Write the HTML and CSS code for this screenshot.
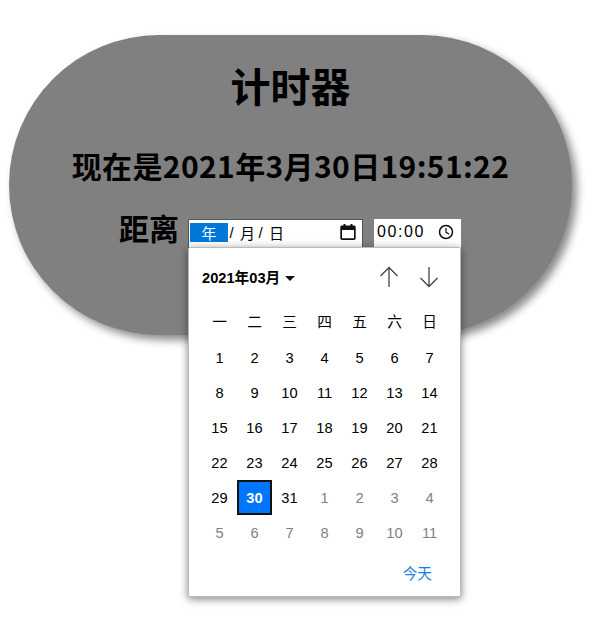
FILE: index.html
```html
<!DOCTYPE html>
<html lang="zh-CN">
<head>
<meta charset="utf-8">
<title>计时器</title>
<link rel="stylesheet" href="styles.css">
</head>
<body>
<main class="pill">
  <h1 class="title">计时器</h1>
  <h2 class="now">现在是2021年3月30日19:51:22</h2>
  <div class="target">
    <span class="label">距离</span>
    <div class="date-input">
      <span class="seg seg-on">年</span><span class="sep">/</span><span class="seg seg-m">月</span><span class="sep sep-2">/</span><span class="seg seg-d">日</span>
      <svg class="cal-icon" viewBox="0 0 18 18" width="18" height="18" aria-hidden="true"><path d="M3 2.5h1.5V1h2v1.5h5V1h2v1.5H15c1 0 1.700.7 1.700 1.700v11.100c0 1-.7 1.700-1.700 1.700H3c-1 0-1.700-.7-1.700-1.700V4.200C1.300 3.200 2 2.500 3 2.500zM3 7v8.300h12V7z" fill="#111"/></svg>
    </div>
    <div class="time-input">
      <span class="time-text">00:00</span>
      <svg class="clock-icon" viewBox="0 0 16 16" width="16" height="16" aria-hidden="true"><circle cx="8" cy="8" r="6.500" fill="none" stroke="#111" stroke-width="1.500"/><path d="M8 4v4.300l3.200 1.800" fill="none" stroke="#111" stroke-width="1.200"/></svg>
    </div>
    <section class="picker">
      <header class="picker-head">
        <span class="month">2021年03月<i class="caret"></i></span>
        <span class="arrows">
          <svg viewBox="0 0 20 22" width="20" height="22" aria-hidden="true"><path d="M10 21V1.500M1.500 10L10 1.500 18.500 10" fill="none" stroke="#444" stroke-width="1.300"/></svg>
          <svg viewBox="0 0 20 22" width="20" height="22" aria-hidden="true"><path d="M10 1v19.500M1.500 12l8.500 8.500 8.500-8.500" fill="none" stroke="#444" stroke-width="1.300"/></svg>
        </span>
      </header>
      <div class="grid">
        <span class="wd">一</span><span class="wd">二</span><span class="wd">三</span><span class="wd">四</span><span class="wd">五</span><span class="wd">六</span><span class="wd">日</span>
        <span>1</span><span>2</span><span>3</span><span>4</span><span>5</span><span>6</span><span>7</span>
        <span>8</span><span>9</span><span>10</span><span>11</span><span>12</span><span>13</span><span>14</span>
        <span>15</span><span>16</span><span>17</span><span>18</span><span>19</span><span>20</span><span>21</span>
        <span>22</span><span>23</span><span>24</span><span>25</span><span>26</span><span>27</span><span>28</span>
        <span>29</span><span class="sel">30</span><span>31</span><span class="dim">1</span><span class="dim">2</span><span class="dim">3</span><span class="dim">4</span>
        <span class="dim">5</span><span class="dim">6</span><span class="dim">7</span><span class="dim">8</span><span class="dim">9</span><span class="dim">10</span><span class="dim">11</span>
      </div>
      <footer class="picker-foot"><span class="today">今天</span></footer>
    </section>
  </div>
</main>
</body>
</html>
```
FILE: styles.css
```css
* { box-sizing: border-box; }
html, body { margin: 0; padding: 0; background: #fff; }
body {
  width: 596px;
  height: 618px;
  overflow: hidden;
  padding: 35px 0 0 9px;
  font-family: "Noto Sans CJK SC", "Noto Sans", sans-serif;
  color: #000;
}
.pill {
  width: 563px;
  height: 300px;
  border-radius: 150px;
  background: #808080;
  box-shadow: 5px 5px 8px #8a8a8a;
  display: flex;
  flex-direction: column;
  align-items: center;
}
.title {
  margin: 21px 0 0;
  font-size: 40px;
  line-height: 58px;
  font-weight: 700;
}
.now {
  margin: 29px 0 0;
  font-size: 30px;
  line-height: 44px;
  font-weight: 700;
  letter-spacing: 0.380px;
}
.target {
  position: relative;
  margin-top: 18px;
  width: 563px;
  padding-left: 110px;
  display: flex;
  align-items: flex-start;
}
.label {
  font-size: 30px;
  line-height: 44px;
  font-weight: 700;
  width: 69px;
}
.date-input {
  margin-top: 14px;
  width: 175px;
  height: 30px;
  background: #fff;
  border: 1px solid #555;
  border-bottom: 0;
  padding: 3px 0 0 1px;
  display: flex;
  align-items: flex-start;
  font-size: 15px;
  line-height: 19px;
}
.seg-on {
  width: 38px;
  text-align: center;
  background: #0078d7;
  color: #fff;
}
.seg-m { margin-left: 5px; }
.seg-d { margin-left: 5px; }
.sep {
  width: 7px;
  text-align: center;
  font-family: "Liberation Sans", sans-serif;
}
.sep-2 { margin-left: 2px; }
.cal-icon { margin-left: auto; margin-right: 5px; }
.time-input {
  margin-top: 14px;
  margin-left: 11px;
  width: 87px;
  height: 30px;
  background: #fff;
  padding: 3px 7px 0 3px;
  display: flex;
  align-items: flex-start;
  justify-content: space-between;
}
.time-text {
  font-family: "Liberation Sans", sans-serif;
  font-size: 16px;
  line-height: 19px;
  letter-spacing: 1.600px;
}
.clock-icon { margin-top: 2px; }
.picker {
  position: absolute;
  left: 179px;
  top: 42px;
  width: 273px;
  height: 350px;
  background: #fff;
  border: 1px solid #bbb;
  border-radius: 2px 2px 0 0;
  box-shadow: 0 2px 8px rgba(0, 0, 0, 0.5);
  padding: 0 12px 0 13px;
  font-family: "Liberation Sans", "Noto Sans CJK SC", sans-serif;
  font-size: 14.670px;
  display: flex;
  flex-direction: column;
}
.picker-head {
  height: 57px;
  padding-top: 18px;
  display: flex;
  justify-content: space-between;
  align-items: flex-start;
}
.month {
  line-height: 24px;
  font-weight: 700;
  display: flex;
  align-items: center;
}
.caret {
  margin-left: 5px;
  border-left: 5px solid transparent;
  border-right: 5px solid transparent;
  border-top: 5px solid #111;
}
.arrows { display: flex; gap: 20px; margin-right: 9px; }
.grid {
  display: grid;
  grid-template-columns: repeat(7, 35px);
  grid-auto-rows: 35px;
}
.grid span {
  display: flex;
  align-items: center;
  justify-content: center;
}
.grid .wd { font-weight: 400; padding-bottom: 4px; }
.grid .dim { color: #808080; }
.grid .sel {
  background: #0075ff;
  border: 2px solid #111;
  color: #fff;
  font-weight: 700;
}
.picker-foot {
  display: flex;
  justify-content: flex-end;
  padding: 14px 16px 0 0;
}
.today {
  color: #1a7ed6;
  line-height: 20px;
}
```
